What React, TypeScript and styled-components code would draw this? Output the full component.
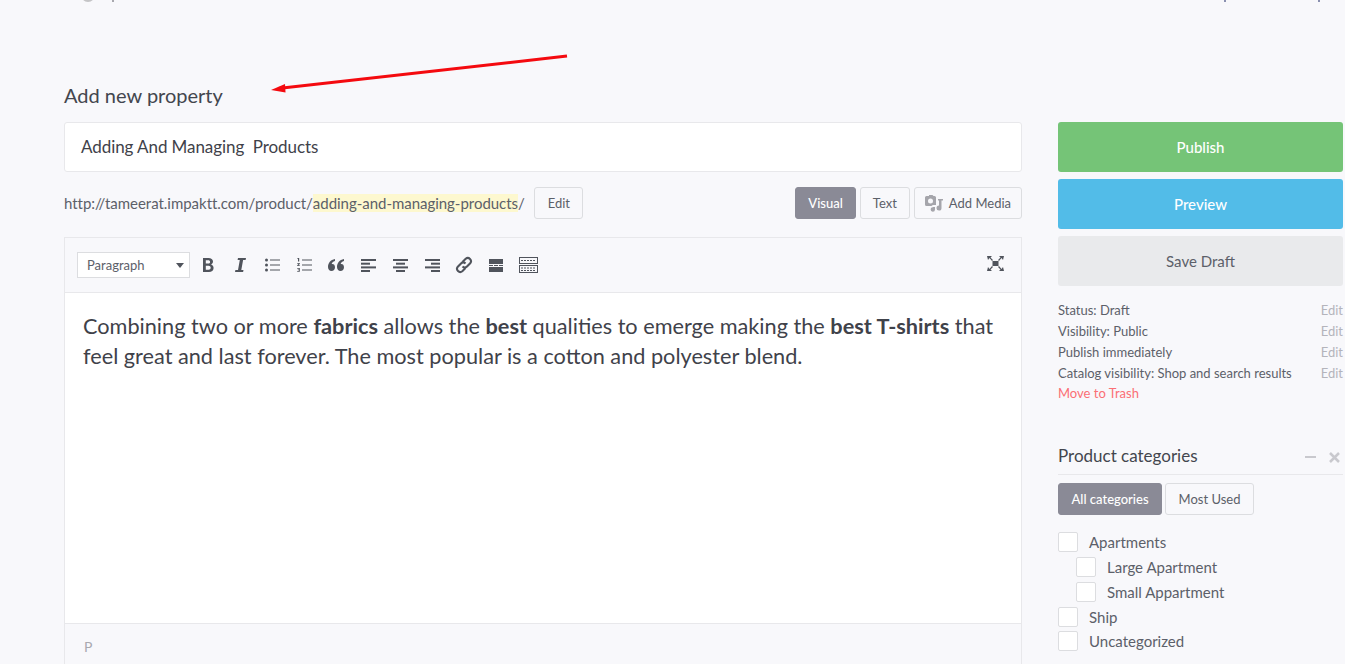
import React from "react"
import styled, { createGlobalStyle } from "styled-components"

const GlobalStyle = createGlobalStyle`
  html, body {
    margin: 0;
    padding: 0;
    height: 100%;
    overflow: hidden;
    background: #f8f8fb;
  }
  body {
    font-family: Lato, "Liberation Sans", sans-serif;
    color: #484b53;
  }
`

const Page = styled.div`
  position: relative;
  width: 1345px;
  height: 664px;
  overflow: hidden;
  padding-left: 64px;
  box-sizing: border-box;
`
const TopStrip = styled.div`
  height: 3px;
  overflow: hidden;
  position: relative;
`
const Avatar = styled.span`
  position: absolute;
  left: 17px;
  top: -12px;
  width: 14px;
  height: 14px;
  border-radius: 50%;
  background: #c4c4c6;
`
const TopBit = styled.span<{ $left: number; $color: string }>`
  position: absolute;
  left: ${(p) => p.$left}px;
  top: 0;
  width: 2px;
  height: 2px;
  background: ${(p) => p.$color};
`
const Arrow = styled.svg`
  position: absolute;
  left: 260px;
  top: 45px;
`
const Heading = styled.h1`
  margin: 80px 0 0;
  font-size: 20px;
  line-height: 24px;
  font-weight: 400;
  color: #43464e;
`
const Columns = styled.div`
  display: flex;
  margin-top: 15px;
  gap: 36px;
`
const MainColumn = styled.div`
  width: 958px;
`
const TitleBox = styled.div`
  height: 50px;
  box-sizing: border-box;
  border: 1px solid #e8e8eb;
  border-radius: 3px;
  background: #fff;
  padding: 0 0 2px 16px;
  display: flex;
  align-items: center;
  font-size: 17px;
  letter-spacing: -0.07px;
  color: #3f424a;
  white-space: pre;
`
const LinkRow = styled.div`
  display: flex;
  align-items: center;
  height: 32px;
  margin-top: 15px;
  font-size: 15px;
  letter-spacing: -0.03px;
  color: #5c6069;
`
const Slug = styled.span`
  background: #fdf8cf;
`
const Button = styled.button<{ $active?: boolean }>`
  height: 32px;
  box-sizing: border-box;
  border: 1px solid ${(p) => (p.$active ? "#8a8a96" : "#dcdde0")};
  border-radius: 3px;
  background: ${(p) => (p.$active ? "#8a8a96" : "#f8f8fb")};
  color: ${(p) => (p.$active ? "#fff" : "#5c6069")};
  font-family: inherit;
  font-size: 13px;
  font-weight: ${(p) => (p.$active ? 500 : 400)};
  padding: 0 12px;
  display: inline-flex;
  align-items: center;
  white-space: nowrap;
`
const SlugEdit = styled(Button)`
  margin-left: 9.500px;
  width: 49px;
  justify-content: center;
  padding: 0;
`
const EditorTabs = styled.div`
  margin-left: auto;
  display: flex;
  gap: 4px;
`
const MediaButton = styled(Button)`
  padding: 0 10px;
  gap: 6px;
`
const Editor = styled.div`
  margin-top: 18px;
  border: 1px solid #e8e8eb;
  border-bottom: none;
  box-sizing: border-box;
`
const Toolbar = styled.div`
  height: 55px;
  box-sizing: border-box;
  border-bottom: 1px solid #e8e8eb;
  display: flex;
  align-items: center;
  padding-left: 12px;
  padding-right: 17px;
`
const FormatSelect = styled.div`
  width: 113px;
  height: 26px;
  box-sizing: border-box;
  border: 1px solid #dcdde0;
  background: #fff;
  display: flex;
  align-items: center;
  justify-content: space-between;
  padding: 0 5px 0 9px;
  font-size: 13px;
  color: #5c6069;
  margin-right: 2px;
`
const Caret = styled.span`
  width: 0;
  height: 0;
  border-left: 4px solid transparent;
  border-right: 4px solid transparent;
  border-top: 5px solid #50545c;
`
const ToolIcon = styled.span`
  width: 32px;
  height: 26px;
  display: flex;
  align-items: center;
  justify-content: center;
  color: #50545c;
  svg {
    display: block;
  }
`
const FullscreenIcon = styled(ToolIcon)`
  margin-left: auto;
  width: 18px;
  margin-top: -4px;
`
const Body = styled.div`
  height: 331px;
  box-sizing: border-box;
  background: #fff;
  border-bottom: 1px solid #e8e8eb;
  padding: 18px 18px 0;
  font-size: 21.7px;
  line-height: 30px;
  color: #3f424a;
  b {
    font-weight: 700;
  }
`
const StatusBar = styled.div`
  height: 46px;
  padding: 15px 0 0 19px;
  box-sizing: border-box;
  font-size: 14px;
  line-height: 16px;
  color: #a9a9b0;
`
const SideColumn = styled.div`
  width: 285px;
`
const ActionButton = styled.button<{ $bg: string; $fg: string; $weight?: number }>`
  display: block;
  width: 100%;
  height: 50px;
  border: none;
  border-radius: 3px;
  background: ${(p) => p.$bg};
  color: ${(p) => p.$fg};
  font-family: inherit;
  font-size: 15px;
  font-weight: ${(p) => p.$weight ?? 400};
  margin-bottom: 7px;
`
const MetaList = styled.div`
  margin-top: 14px;
  font-size: 13px;
  line-height: 21px;
  color: #5c6069;
`
const MetaRow = styled.div`
  display: flex;
  justify-content: space-between;
`
const MetaEdit = styled.span`
  color: #b4b4bb;
`
const Trash = styled.div`
  margin-top: -1px;
  color: #fb6f75;
`
const WidgetHeader = styled.div`
  margin-top: 40px;
  height: 30px;
  display: flex;
  align-items: flex-start;
  border-bottom: 1px solid #e8e8eb;
  font-size: 17px;
  line-height: 24px;
  color: #43464e;
`
const WidgetControls = styled.div`
  margin-left: auto;
  display: flex;
  align-items: center;
  gap: 13px;
  height: 26px;
  padding-right: 3px;
  color: #c9c9ce;
`
const WidgetTabs = styled.div`
  display: flex;
  gap: 3px;
  margin-top: 8px;
`
const WidgetTab = styled(Button)`
  padding: 0 12.5px;
`
const CategoryList = styled.div`
  margin-top: 15px;
  display: flex;
  flex-direction: column;
`
const CategoryRow = styled.label<{ $nested?: boolean }>`
  display: flex;
  align-items: center;
  height: 24.75px;
  padding-left: ${(p) => (p.$nested ? 18 : 0)}px;
  font-size: 15px;
  color: #5c6069;
`
const Check = styled.span`
  width: 20px;
  height: 20px;
  box-sizing: border-box;
  border: 1px solid #dcdde0;
  border-radius: 2px;
  background: #fff;
  margin-right: 11px;
`

const tools: React.ReactNode[] = [
  <svg key="b" width="14" height="16" viewBox="0 0 14 16" fill="currentColor">
    <path fillRule="evenodd" d="M2 1h5.500C10 1 12 2.200 12 4.500c0 1.400-.8 2.500-2 3 1.500.4 2.600 1.600 2.600 3.400C12.600 13.500 10.500 15 8 15H2V1zm2.800 2.300v3.200h2.400c1 0 1.900-.6 1.900-1.600S8.300 3.300 7.200 3.300H4.800zm0 5.400v4h2.800c1.200 0 2.100-.8 2.100-2s-.9-2-2.100-2H4.800z" />
  </svg>,
  <svg key="i" width="14" height="16" viewBox="0 0 14 16" fill="currentColor">
    <path d="M5 1h8l-.4 2h-2.500L8.300 13h2.200l-.4 2H2l.4-2h2.600l1.800-10H4.600L5 1z" />
  </svg>,
  <svg key="ul" width="15" height="14" viewBox="0 0 15 14" fill="currentColor">
    <circle cx="1.500" cy="2" r="1.500" />
    <circle cx="1.500" cy="7" r="1.500" />
    <circle cx="1.500" cy="12" r="1.500" />
    <rect x="5" y="1.500" width="10" height="1" />
    <rect x="5" y="6.500" width="10" height="1" />
    <rect x="5" y="11.500" width="10" height="1" />
  </svg>,
  <svg key="ol" width="15" height="14" viewBox="0 0 15 14" fill="currentColor">
    <path d="M1 0h1.200v3.500H1V1H.3V.4L1 0zM.2 5h2.600v.9L1.400 7.200h1.400V8H.2v-.8l1.500-1.400H.2V5zm0 5h2.600v3.800H.2V13h1.700v-.7H.8v-.7h1.100v-.8H.2V10z" />
    <rect x="5" y="1.500" width="10" height="1" />
    <rect x="5" y="6.500" width="10" height="1" />
    <rect x="5" y="11.500" width="10" height="1" />
  </svg>,
  <svg key="q" width="16" height="12" viewBox="0 0 16 12" fill="currentColor">
    <path d="M7 0v2C5 2.500 4 3.500 3.700 5c2-.3 3.300 1 3.300 3.200C7 10.300 5.600 12 3.500 12 1.300 12 0 10.200 0 8c0-4 2.500-7.200 7-8zm9 0v2c-2 .5-3 1.500-3.300 3 2-.3 3.300 1 3.300 3.200 0 2.100-1.400 3.800-3.500 3.800C10.300 12 9 10.200 9 8c0-4 2.500-7.200 7-8z" />
  </svg>,
  <svg key="al" width="15" height="13" viewBox="0 0 15 13" fill="currentColor">
    <rect width="15" height="2" />
    <rect y="3.700" width="9" height="2" />
    <rect y="7.400" width="15" height="2" />
    <rect y="11" width="9" height="2" />
  </svg>,
  <svg key="ac" width="15" height="13" viewBox="0 0 15 13" fill="currentColor">
    <rect width="15" height="2" />
    <rect x="3" y="3.700" width="9" height="2" />
    <rect y="7.400" width="15" height="2" />
    <rect x="3" y="11" width="9" height="2" />
  </svg>,
  <svg key="ar" width="15" height="13" viewBox="0 0 15 13" fill="currentColor">
    <rect width="15" height="2" />
    <rect x="6" y="3.700" width="9" height="2" />
    <rect y="7.400" width="15" height="2" />
    <rect x="6" y="11" width="9" height="2" />
  </svg>,
  <svg key="link" width="18" height="18" viewBox="0 0 18 18" fill="none" stroke="currentColor" strokeWidth="2.100">
    <path d="M7.500 6 10.700 2.800a3.200 3.200 0 0 1 4.500 4.500l-3.200 3.200a3.200 3.200 0 0 1-4.500 0" />
    <path d="M10.500 12 7.300 15.200a3.200 3.200 0 0 1-4.500-4.500L6 7.500a3.200 3.200 0 0 1 4.500 0" />
  </svg>,
  <svg key="more" width="14" height="13" viewBox="0 0 14 13" fill="currentColor">
    <rect width="14" height="5" />
    <rect y="8" width="14" height="5" />
    <rect y="6" width="4" height="1" />
    <rect x="5" y="6" width="4" height="1" />
    <rect x="10" y="6" width="4" height="1" />
  </svg>,
  <svg key="kitchen" width="19" height="16" viewBox="0 0 19 16" fill="none" stroke="currentColor">
    <rect x="0.500" y="0.500" width="18" height="6" />
    <rect x="0.500" y="8.500" width="18" height="7" />
    <path d="M2 3.500h15M2 11h15M2 13.500h15" strokeDasharray="2 1" />
  </svg>,
]

const meta = ["Status: Draft", "Visibility: Public", "Publish immediately", "Catalog visibility: Shop and search results"]

export default function App() {
  return (
    <Page>
      <GlobalStyle />
      <TopStrip>
        <Avatar />
        <TopBit $left={48} $color="#a8a8ae" />
        <TopBit $left={1160} $color="#8a90b0" />
        <TopBit $left={1254} $color="#8a90b0" />
      </TopStrip>
      <Arrow width="320" height="60" viewBox="0 0 320 60">
        <path d="M307 11 L18 43.500" stroke="#f40a0f" strokeWidth="3" fill="none" />
        <path d="M11 45 L25 39 L25.500 47.500 Z" fill="#f40a0f" />
      </Arrow>
      <Heading>Add new property</Heading>
      <Columns>
        <MainColumn>
          <TitleBox>Adding And Managing  Products</TitleBox>
          <LinkRow>
            http://tameerat.impaktt.com/product/
            <Slug>adding-and-managing-products</Slug>/
            <SlugEdit>Edit</SlugEdit>
            <EditorTabs>
              <Button $active>Visual</Button>
              <Button>Text</Button>
              <MediaButton>
                <svg width="18" height="17" viewBox="0 0 18 17" fill="#a5a5ab">
                  <path fillRule="evenodd" d="M1.500 1H4V0h3.500l1 1h1A1.500 1.500 0 0 1 11 2.500V10H9a2.500 2.500 0 0 0-2.500 1H1.500A1.500 1.500 0 0 1 0 9.500v-7A1.500 1.500 0 0 1 1.500 1zM5.500 3.500a2.500 2.500 0 1 0 0 5 2.500 2.500 0 0 0 0-5z" />
                  <path d="M13 4h5v1.500h-1.500V13a2.500 2.500 0 1 1-2.500-2.400V5.500h-1V4zM8 12h2v2.500A2.200 2.200 0 1 1 8 12.300V12z" />
                </svg>
                Add Media
              </MediaButton>
            </EditorTabs>
          </LinkRow>
          <Editor>
            <Toolbar>
              <FormatSelect>
                Paragraph
                <Caret />
              </FormatSelect>
              {tools.map((t, i) => (
                <ToolIcon key={i}>{t}</ToolIcon>
              ))}
              <FullscreenIcon>
                <svg width="17" height="15" viewBox="0 0 17 15" fill="currentColor">
                  <rect x="5.500" y="5" width="6" height="5" />
                  <path d="M0 0h5L3.500 1.500 6 4 5 5 2.500 2 1 4 0 0zM17 0h-5l1.500 1.500L11 4l1 1 2.500-3L16 4l1-4zM0 15h5l-1.500-1.500L6 11l-1-1-2.500 3L1 11l-1 4zM17 15h-5l1.500-1.500L11 11l1-1 2.500 3L16 11l1 4z" />
                </svg>
              </FullscreenIcon>
            </Toolbar>
            <Body>
              Combining two or more <b>fabrics</b> allows the <b>best</b> qualities to emerge making the <b>best T-shirts</b> that feel great and last forever. The most popular is a cotton and polyester blend.
            </Body>
            <StatusBar>P</StatusBar>
          </Editor>
        </MainColumn>
        <SideColumn>
          <ActionButton $bg="#75c477" $fg="#fff" $weight={500}>Publish</ActionButton>
          <ActionButton $bg="#52bce8" $fg="#fff" $weight={500}>Preview</ActionButton>
          <ActionButton $bg="#e9eaec" $fg="#5c6069">Save Draft</ActionButton>
          <MetaList>
            {meta.map((m) => (
              <MetaRow key={m}>
                {m}
                <MetaEdit>Edit</MetaEdit>
              </MetaRow>
            ))}
            <Trash>Move to Trash</Trash>
          </MetaList>
          <WidgetHeader>
            Product categories
            <WidgetControls>
              <svg width="11" height="2" viewBox="0 0 11 2" fill="currentColor">
                <rect width="11" height="2" />
              </svg>
              <svg width="11" height="11" viewBox="0 0 11 11" stroke="currentColor" strokeWidth="2.500">
                <path d="M1 1l9 9M10 1l-9 9" />
              </svg>
            </WidgetControls>
          </WidgetHeader>
          <WidgetTabs>
            <WidgetTab $active>All categories</WidgetTab>
            <WidgetTab>Most Used</WidgetTab>
          </WidgetTabs>
          <CategoryList>
            <CategoryRow><Check />Apartments</CategoryRow>
            <CategoryRow $nested><Check />Large Apartment</CategoryRow>
            <CategoryRow $nested><Check />Small Appartment</CategoryRow>
            <CategoryRow><Check />Ship</CategoryRow>
            <CategoryRow><Check />Uncategorized</CategoryRow>
          </CategoryList>
        </SideColumn>
      </Columns>
    </Page>
  )
}
